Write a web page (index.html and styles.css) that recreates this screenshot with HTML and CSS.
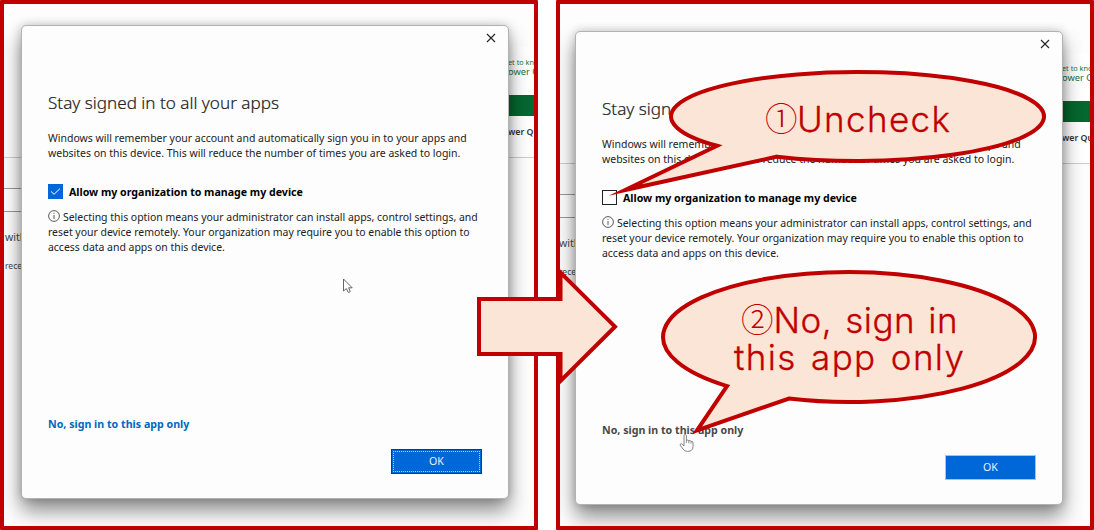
FILE: index.html
```html
<!DOCTYPE html>
<html lang="en">
<head>
<meta charset="utf-8">
<title>Stay signed in to all your apps</title>
<link rel="stylesheet" href="styles.css">
</head>
<body>
<main class="guide">
  <section class="panel panel-before">
    <div class="screen">
      <div class="page">
        <div class="page-left"><div class="strip"></div><div class="field"></div><div class="with">with</div><div class="rece">rece</div></div>
        <div class="page-right"><div class="promo"><div class="know">et to know</div><div class="power">ower Query</div></div><div class="band"></div><div class="query">wer Query</div></div>
      </div>
      <div class="dialog">
        <div class="titlebar"><svg class="close" viewBox="0 0 10 10"><path d="M1 1L9 9M9 1L1 9"/></svg></div>
        <h1>Stay signed in to all your apps</h1>
        <p class="intro">Windows will remember your account and automatically sign you in to your apps and<br>websites on this device. This will reduce the number of times you are asked to login.</p>
        <div class="option"><span class="box checked"><svg viewBox="0 0 15 15"><path d="M3 7.4L6 10.3L12 4.6"/></svg></span><b>Allow my organization to manage my device</b></div>
        <p class="info"><svg class="info-icon" viewBox="0 0 12 12"><circle cx="6" cy="6" r="5.4"/><path d="M6 5V9M6 2.8V3.9"/></svg>Selecting this option means your administrator can install apps, control settings, and<br>reset your device remotely. Your organization may require you to enable this option to<br>access data and apps on this device.</p>
        <a class="link">No, sign in to this app only</a>
        <button class="ok focused"><span>OK</span></button>
      </div>
      <svg class="cursor arrow-cursor" viewBox="0 0 12 17"><path d="M1.5 1V13L4.4 10.6L6.4 14.6L8.3 13.6L6.6 9.8H10.2Z"/></svg>
    </div>
  </section>
  <section class="panel panel-after">
    <div class="screen">
      <div class="page">
        <div class="page-left"><div class="strip"></div><div class="field"></div><div class="with">with</div><div class="rece">rece</div></div>
        <div class="page-right"><div class="promo"><div class="know">et to know</div><div class="power">ower Query</div></div><div class="band"></div><div class="query">wer Query</div></div>
      </div>
      <div class="dialog">
        <div class="titlebar"><svg class="close" viewBox="0 0 10 10"><path d="M1 1L9 9M9 1L1 9"/></svg></div>
        <h1>Stay signed in to all your apps</h1>
        <p class="intro">Windows will remember your account and automatically sign you in to your apps and<br>websites on this device. This will reduce the number of times you are asked to login.</p>
        <div class="option"><span class="box"></span><b>Allow my organization to manage my device</b></div>
        <p class="info"><svg class="info-icon" viewBox="0 0 12 12"><circle cx="6" cy="6" r="5.4"/><path d="M6 5V9M6 2.8V3.9"/></svg>Selecting this option means your administrator can install apps, control settings, and<br>reset your device remotely. Your organization may require you to enable this option to<br>access data and apps on this device.</p>
        <a class="link hovered">No, sign in to this app only</a>
        <button class="ok"><span>OK</span></button>
      </div>
    </div>
  </section>
  <svg class="overlay" viewBox="0 0 1094 530">
    <path class="shape" d="M479 299H560.5V272.5L615 326.7L560.5 381V354H479Z"/>
    <path class="shape" d="M717 145.76A186.5 44.5 0 1 1 777 156.64L625 190Z"/>
    <path class="shape" d="M727 386.06A186 65 0 1 1 789 398.53L697 430.5Z"/>
    <text class="digit" x="765" y="131">①</text>
    <text class="note" x="797" y="131.5" textLength="153">Uncheck</text>
    <text class="digit" x="741" y="332">②</text>
    <text class="note" x="773.5" y="332.5" textLength="184">No, sign in</text>
    <text class="note" x="734" y="370" textLength="230">this app only</text>
    <path class="hand" d="M684 446V435.8Q684 434.5 685.2 434.5T686.4 435.8V440.5Q688 439.4 688.8 440.8Q690.4 440 691 441.4Q693 441 693 443V446.5Q693 451.4 687.5 451.4Q684.6 451.4 683 449L680.2 445.2Q680 443.6 681.6 443.7Z"/>
    <path class="hand-lines" d="M686.4 440.5V443M688.8 440.8V443.4M691 441.4V443.6"/>
  </svg>
</main>
</body>
</html>
```
FILE: styles.css
```css
* { box-sizing: border-box; }
body { margin: 0; background: #fff; font-family: "Noto Sans", sans-serif; }
h1, p { margin: 0; font-weight: 400; }
.guide { position: relative; width: 1094px; height: 530px; display: flex; gap: 18px; overflow: hidden; }
.panel { flex: 0 0 538px; height: 530px; border: 4px solid #c00000; border-radius: 1px; overflow: hidden; background: #fdfdfd; }
.screen { position: relative; width: 534px; height: 540px; }
.panel-after .screen { margin: 6px 0 0 -2px; }

/* Browser page behind the dialog */
.page { display: flex; justify-content: space-between; height: 540px; }
.page-left { width: 40px; padding-top: 153px; color: #444; white-space: nowrap; }
.strip { height: 31px; border-top: 1px solid #ccc; background: #fcfcfc; }
.field { height: 24px; border: solid #999; border-width: 1px 0; background: #fff; }
.with { margin-top: 18px; padding-left: 1px; font-size: 10.5px; line-height: 15px; }
.rece { margin-top: 15px; padding-left: 1px; font-size: 8.5px; line-height: 12px; }
.page-right { width: 41px; padding-top: 43px; white-space: nowrap; }
.promo { height: 48px; padding: 11px 0 0 11px; background: #fff; color: #17733f; }
.know { font-size: 7.3px; line-height: 9px; }
.power { font-size: 9.3px; line-height: 10px; }
.band { height: 21px; background: #05682f; }
.query { height: 42px; padding: 10px 0 0 11px; border-bottom: 1px solid #ccc; background: #fff; color: #333; font-size: 8.8px; font-weight: 600; line-height: 13px; }

/* Sign-in dialog */
.dialog { position: absolute; left: 17px; top: 21px; width: 488px; height: 474px; padding: 0 26px; border: 1px solid #b2b2b2; border-radius: 5px; background: #fdfdfd; box-shadow: 0 12px 20px rgba(0,0,0,.44), 0 0 10px rgba(0,0,0,.2); color: #222; display: flex; flex-direction: column; align-items: flex-start; }
.titlebar { width: 100%; height: 64.5px; padding: 7px 0 0 438px; margin-right: -20px; }
.close { display: block; width: 10px; height: 10px; fill: none; stroke: #222; stroke-width: 1.1; overflow: visible; }
h1 { font-size: 17.1px; font-weight: 300; line-height: 24px; white-space: nowrap; -webkit-text-stroke: .2px #222; }
.intro { margin-top: 16px; font-size: 10.49px; line-height: 15px; white-space: nowrap; }
.option { display: flex; align-items: center; gap: 6px; height: 16px; margin-top: 22.5px; color: #000; font-size: 10.61px; line-height: 16px; white-space: nowrap; }
.option b { padding-top: 1px; }
.box { width: 15px; height: 15px; border: 1.6px solid #222; }
.box.checked { border: 0; background: #0067d8; }
.box svg { display: block; width: 15px; height: 15px; fill: none; stroke: #fff; stroke-width: 1; }
.info { margin-top: 11px; font-size: 10.48px; line-height: 15px; letter-spacing: -.015px; white-space: nowrap; }
.info-icon { width: 12px; height: 12px; margin: 0 3px -1px 0; fill: none; stroke: #333; stroke-width: .8; }
.link { margin-top: 162px; color: #0067c0; font-size: 10.66px; font-weight: 700; line-height: 15px; white-space: nowrap; }
.link.hovered { color: #484848; }
.ok { align-self: flex-end; width: 91px; height: 25px; margin-top: 16.5px; padding: 2px; border: 0; outline: 1px solid #9cc8f0; outline-offset: -1px; background: #0067d8; color: #e4f3ff; font: 10.6px/19px "Noto Sans", sans-serif; }
.ok span { display: block; height: 21px; border: 1px solid transparent; }
.ok.focused { outline: 1px solid #073f86; }
.ok.focused span { border: 1px dotted #a9d4f5; }
.cursor { position: absolute; }
.arrow-cursor { left: 338px; top: 274px; width: 12px; height: 17px; fill: #fff; stroke: #555; stroke-width: .9; }

/* Callouts drawn across both panels */
.overlay { position: absolute; left: 0; top: 0; width: 1094px; height: 530px; }
.shape { fill: #fbe5d6; stroke: #c00000; stroke-width: 4; stroke-miterlimit: 20; }
.note { fill: #c00000; font-family: Inter, sans-serif; font-size: 35px; font-weight: 300; word-spacing: 3px; stroke: #c00000; stroke-width: .3; }
.digit { fill: #c00000; font-family: "Noto Sans CJK JP", sans-serif; font-size: 32.5px; font-weight: 300; }
.hand { fill: #fff; stroke: #777; stroke-width: .9; }
.hand-lines { fill: none; stroke: #777; stroke-width: .8; }
```
